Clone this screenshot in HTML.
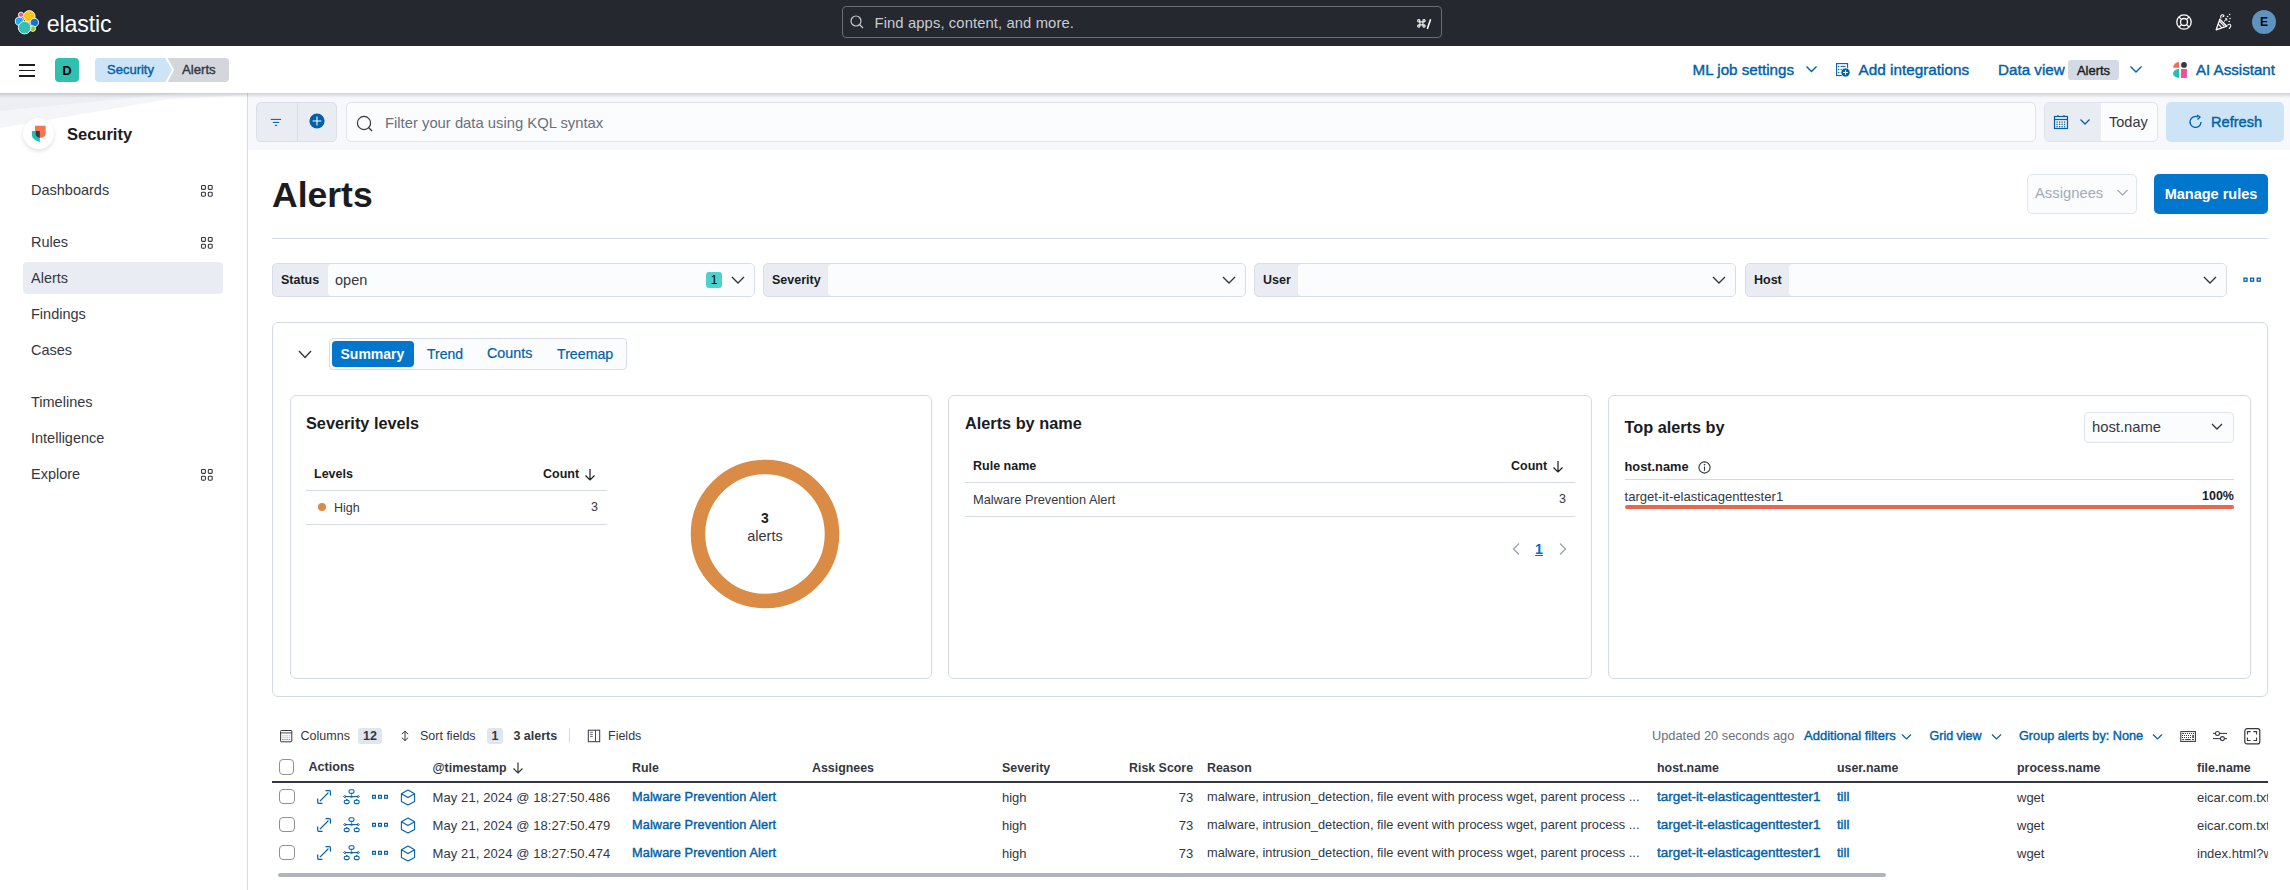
<!DOCTYPE html>
<html><head><meta charset="utf-8"><title>Alerts - Kibana</title>
<style>
html,body{margin:0;padding:0;width:2290px;height:890px;overflow:hidden;background:#fff;font-family:"Liberation Sans", sans-serif;}
.t{position:absolute;white-space:nowrap;line-height:1;}
</style></head><body>
<div style="position:absolute;left:0px;top:0px;width:2290px;height:46px;background:#25282f"></div>
<svg style="position:absolute;left:14px;top:9px;" width="28" height="28" viewBox="0 0 28 28">
<circle cx="7" cy="5.8" r="2.6" fill="#f04e98" stroke="#fff" stroke-width="0.9"/>
<circle cx="5.4" cy="12.2" r="4.1" fill="#1ba9f5" stroke="#fff" stroke-width="0.9"/>
<circle cx="15.3" cy="7.4" r="5.8" fill="#fec514" stroke="#fff" stroke-width="0.9"/>
<circle cx="20.4" cy="13.5" r="4.2" fill="#0b77d0" stroke="#fff" stroke-width="0.9"/>
<circle cx="18.8" cy="19.6" r="2.8" fill="#93c90e" stroke="#fff" stroke-width="0.9"/>
<circle cx="10.6" cy="18.6" r="6.3" fill="#34c1b2" stroke="#fff" stroke-width="0.9"/>
</svg>
<div class="t" style="left:46.8px;top:12.96px;font-size:23.2px;font-weight:400;color:#ffffff;letter-spacing:-0.15px">elastic</div>
<div style="position:absolute;left:842px;top:6.3px;width:600px;height:31.7px;border:1px solid #6a6e76;border-radius:4px;box-sizing:border-box;background:#25282f"></div>
<svg style="position:absolute;left:850px;top:15px;" width="14" height="14" viewBox="0 0 14 14"><circle cx="6" cy="6" r="5" fill="none" stroke="#c8ccd3" stroke-width="1.2"/><line x1="9.5" y1="9.5" x2="13" y2="13" stroke="#c8ccd3" stroke-width="1.2"/></svg>
<div class="t" style="left:874.5px;top:16.07px;font-size:14.8px;font-weight:400;color:#c8ccd3;letter-spacing:0.1px">Find apps, content, and more.</div>
<svg style="position:absolute;left:1417px;top:19px;" width="16" height="11" viewBox="0 0 16 11"><rect x="2.9" y="2.9" width="3" height="3" fill="none" stroke="#fff" stroke-width="1.1"/><circle cx="1.8" cy="1.8" r="1.15" fill="none" stroke="#fff" stroke-width="1.1"/><circle cx="7" cy="1.8" r="1.15" fill="none" stroke="#fff" stroke-width="1.1"/><circle cx="1.8" cy="7" r="1.15" fill="none" stroke="#fff" stroke-width="1.1"/><circle cx="7" cy="7" r="1.15" fill="none" stroke="#fff" stroke-width="1.1"/><line x1="13.6" y1="0.3" x2="10.3" y2="10" stroke="#fff" stroke-width="1.6"/></svg>
<svg style="position:absolute;left:2175px;top:13px;" width="18" height="18" viewBox="0 0 18 18"><circle cx="9" cy="9" r="7.2" fill="none" stroke="#fff" stroke-width="1.3"/><circle cx="9" cy="9" r="3.5" fill="none" stroke="#fff" stroke-width="1.3"/><line x1="4" y1="4" x2="6.5" y2="6.5" stroke="#fff" stroke-width="1.3"/><line x1="14" y1="4" x2="11.5" y2="6.5" stroke="#fff" stroke-width="1.3"/><line x1="4" y1="14" x2="6.5" y2="11.5" stroke="#fff" stroke-width="1.3"/><line x1="14" y1="14" x2="11.5" y2="11.5" stroke="#fff" stroke-width="1.3"/></svg>
<svg style="position:absolute;left:2215px;top:13px;" width="18" height="18" viewBox="0 0 18 18"><path d="M1.2 16.8 L4.8 6.2 L11.8 13.2 Z" fill="none" stroke="#fff" stroke-width="1.3" stroke-linejoin="round"/><path d="M3.2 11 L7 14.8 M4.2 8 L9.5 13.3" stroke="#fff" stroke-width="1.1"/><path d="M6 5.5 C5 3 6.5 1 8.5 2 C9.5 2.5 8.5 4 7.5 3.5" fill="none" stroke="#fff" stroke-width="1.1"/><path d="M9 8.5 L11.8 5.8 M11.8 5.8 L10 5.8 M11.8 5.8 L11.8 7.6" stroke="#fff" stroke-width="1"/><path d="M12.5 12.5 C13.5 10.5 16 11 15.8 13 C15.6 14.5 14 14.8 14.2 16" fill="none" stroke="#fff" stroke-width="1.1"/><circle cx="14.6" cy="1.6" r="0.75" fill="#fff"/><circle cx="12.5" cy="3.5" r="0.75" fill="#fff"/><circle cx="15" cy="5.5" r="0.75" fill="#fff"/><circle cx="14.2" cy="8.6" r="0.75" fill="#fff"/></svg>
<div style="position:absolute;left:2252px;top:9.8px;width:24.2px;height:24.2px;background:#6092c0;border-radius:50%"></div>
<div class="t" style="left:2264px;transform:translateX(-50%);top:15.84px;font-size:12px;font-weight:700;color:#000;">E</div>
<div style="position:absolute;left:0px;top:46px;width:2290px;height:47px;background:#fff"></div>
<div style="position:absolute;left:19px;top:64px;width:16px;height:1.6px;background:#1a1c21"></div>
<div style="position:absolute;left:19px;top:69.5px;width:16px;height:1.6px;background:#1a1c21"></div>
<div style="position:absolute;left:19px;top:75px;width:16px;height:1.6px;background:#1a1c21"></div>
<div style="position:absolute;left:55px;top:58px;width:24px;height:24px;background:#30c0b2;border-radius:4px"></div>
<div class="t" style="left:67px;transform:translateX(-50%);top:64.00px;font-size:13px;font-weight:700;color:#000;">D</div>
<svg style="position:absolute;left:95px;top:58px;" width="136" height="24" viewBox="0 0 136 24">
<path d="M4 0 H130 a4 4 0 0 1 4 4 V20 a4 4 0 0 1 -4 4 H68 L74 12 L68 0 Z" fill="#d3d6db"/>
<path d="M4 0 H72 L78 12 L72 24 H4 a4 4 0 0 1 -4 -4 V4 a4 4 0 0 1 4 -4 Z" fill="#cce4f5"/>
<path d="M71 -1 L78 12 L71 25" fill="none" stroke="#fff" stroke-width="2"/>
</svg>
<div class="t" style="left:107px;top:62.80px;font-size:13px;font-weight:400;color:#0061a6;-webkit-text-stroke:0.4px currentColor;">Security</div>
<div class="t" style="left:182px;top:62.63px;font-size:13.2px;font-weight:400;color:#343741;-webkit-text-stroke:0.4px currentColor;">Alerts</div>
<div class="t" style="left:1692.5px;top:62.33px;font-size:15.2px;font-weight:400;color:#0061a6;-webkit-text-stroke:0.4px currentColor;">ML job settings</div>
<svg style="position:absolute;left:1805px;top:64px;" width="13" height="10" viewBox="0 0 13 10"><path d="M1.5 2.5 L6.5 7.5 L11.5 2.5" fill="none" stroke="#0061a6" stroke-width="1.4"/></svg>
<svg style="position:absolute;left:1835px;top:62px;" width="16" height="16" viewBox="0 0 16 16"><rect x="1.6" y="1.6" width="11" height="12" fill="none" stroke="#0061a6" stroke-width="1.1"/><circle cx="3.7" cy="4.4" r="0.75" fill="#0061a6"/><circle cx="3.7" cy="7.4" r="0.75" fill="#0061a6"/><circle cx="3.7" cy="10.4" r="0.75" fill="#0061a6"/><line x1="5.6" y1="4.4" x2="10.6" y2="4.4" stroke="#0061a6" stroke-width="1"/><line x1="5.6" y1="7.4" x2="8" y2="7.4" stroke="#0061a6" stroke-width="1"/><line x1="5.6" y1="10.4" x2="7" y2="10.4" stroke="#0061a6" stroke-width="1"/><circle cx="10.5" cy="10.5" r="4.6" fill="#0061a6" stroke="#fff" stroke-width="0.8"/><path d="M10.5 8.2 V12.8 M8.2 10.5 H12.8" stroke="#fff" stroke-width="1.1"/></svg>
<div class="t" style="left:1858.6px;top:62.25px;font-size:15.3px;font-weight:400;color:#0061a6;-webkit-text-stroke:0.4px currentColor;">Add integrations</div>
<div class="t" style="left:1998px;top:61.63px;font-size:15.2px;font-weight:400;color:#0061a6;-webkit-text-stroke:0.4px currentColor;">Data view</div>
<div style="position:absolute;left:2068px;top:60px;width:51px;height:20px;background:#d3dae6;border-radius:3px"></div>
<div class="t" style="left:2093.5px;transform:translateX(-50%);top:63.50px;font-size:13px;font-weight:400;color:#1a1c21;-webkit-text-stroke:0.4px currentColor;">Alerts</div>
<svg style="position:absolute;left:2129px;top:64px;" width="14" height="10" viewBox="0 0 14 10"><path d="M1.5 2.5 L7 8 L12.5 2.5" fill="none" stroke="#0061a6" stroke-width="1.4"/></svg>
<svg style="position:absolute;left:2172px;top:60px;" width="16" height="20" viewBox="0 0 16 20"><path d="M7 7.8 H1.1 A5.9 5.9 0 0 1 7 1.9 Z" fill="#f86b4f"/><circle cx="12" cy="4.9" r="2.9" fill="#343741"/><path d="M7 9 V17.9 A5.9 4.45 0 0 1 7 9 Z" fill="#24bfae"/><rect x="9" y="9" width="5.9" height="8.9" fill="#f04e98"/></svg>
<div class="t" style="left:2196px;top:62.42px;font-size:15.1px;font-weight:400;color:#0061a6;-webkit-text-stroke:0.4px currentColor;">AI Assistant</div>
<div style="position:absolute;left:0px;top:93px;width:247px;height:797px;background:#fff"></div>
<div style="position:absolute;left:247px;top:93px;width:1px;height:797px;background:#d3dae6"></div>
<svg style="position:absolute;left:0;top:93px" width="247" height="40"><path d="M0 0 H247 V2 L170 6 L0 35 Z" fill="#f4f5f9"/><path d="M0 0 H180 L0 18 Z" fill="#eceef4"/></svg>
<div style="position:absolute;left:23px;top:118px;width:31px;height:31px;background:#fff;border-radius:50%;box-shadow:0 2px 4px rgba(0,0,0,0.12)"></div>
<svg style="position:absolute;left:30px;top:124px;" width="17" height="19" viewBox="0 0 17 19"><path d="M5 1.8 H15.6 V10.5 C15.6 12 13 13.5 9.8 14 V7 H5 Z" fill="#fa744e"/><path d="M1.9 7 H9.8 V18 C5 16.5 1.9 14 1.9 11 Z" fill="#24bbb1"/><path d="M5.8 7 H9.8 V14 C7.5 13.3 5.8 12 5.8 10.5 Z" fill="#343741"/></svg>
<div class="t" style="left:67px;top:125.83px;font-size:16.5px;font-weight:700;color:#1a1c21;">Security</div>
<div style="position:absolute;left:23px;top:262px;width:200px;height:32px;background:#e9edf3;border-radius:4px"></div>
<div class="t" style="left:31px;top:183.23px;font-size:14.5px;font-weight:400;color:#343741;">Dashboards</div>
<svg style="position:absolute;left:200px;top:184.0px;" width="14" height="14" viewBox="0 0 14 14"><rect x="1.5" y="1.5" width="3.9" height="3.9" rx="0.9" fill="none" stroke="#343741" stroke-width="1.1"/><rect x="1.5" y="8.3" width="3.9" height="3.9" rx="0.9" fill="none" stroke="#343741" stroke-width="1.1"/><rect x="8.3" y="1.5" width="3.9" height="3.9" rx="0.9" fill="none" stroke="#343741" stroke-width="1.1"/><rect x="8.3" y="8.3" width="3.9" height="3.9" rx="0.9" fill="none" stroke="#343741" stroke-width="1.1"/></svg>
<div class="t" style="left:31px;top:234.73px;font-size:14.5px;font-weight:400;color:#343741;">Rules</div>
<svg style="position:absolute;left:200px;top:235.5px;" width="14" height="14" viewBox="0 0 14 14"><rect x="1.5" y="1.5" width="3.9" height="3.9" rx="0.9" fill="none" stroke="#343741" stroke-width="1.1"/><rect x="1.5" y="8.3" width="3.9" height="3.9" rx="0.9" fill="none" stroke="#343741" stroke-width="1.1"/><rect x="8.3" y="1.5" width="3.9" height="3.9" rx="0.9" fill="none" stroke="#343741" stroke-width="1.1"/><rect x="8.3" y="8.3" width="3.9" height="3.9" rx="0.9" fill="none" stroke="#343741" stroke-width="1.1"/></svg>
<div class="t" style="left:31px;top:270.73px;font-size:14.5px;font-weight:400;color:#343741;">Alerts</div>
<div class="t" style="left:31px;top:306.73px;font-size:14.5px;font-weight:400;color:#343741;">Findings</div>
<div class="t" style="left:31px;top:342.73px;font-size:14.5px;font-weight:400;color:#343741;">Cases</div>
<div class="t" style="left:31px;top:394.73px;font-size:14.5px;font-weight:400;color:#343741;">Timelines</div>
<div class="t" style="left:31px;top:430.73px;font-size:14.5px;font-weight:400;color:#343741;">Intelligence</div>
<div class="t" style="left:31px;top:466.73px;font-size:14.5px;font-weight:400;color:#343741;">Explore</div>
<svg style="position:absolute;left:200px;top:467.5px;" width="14" height="14" viewBox="0 0 14 14"><rect x="1.5" y="1.5" width="3.9" height="3.9" rx="0.9" fill="none" stroke="#343741" stroke-width="1.1"/><rect x="1.5" y="8.3" width="3.9" height="3.9" rx="0.9" fill="none" stroke="#343741" stroke-width="1.1"/><rect x="8.3" y="1.5" width="3.9" height="3.9" rx="0.9" fill="none" stroke="#343741" stroke-width="1.1"/><rect x="8.3" y="8.3" width="3.9" height="3.9" rx="0.9" fill="none" stroke="#343741" stroke-width="1.1"/></svg>
<div style="position:absolute;left:248px;top:93px;width:2042px;height:57px;background:#f7f8fc"></div>
<div style="position:absolute;left:256px;top:102px;width:81px;height:40px;background:#e9edf3;border:1px solid #d9dee9;border-radius:5px;box-sizing:border-box"></div>
<div style="position:absolute;left:296.5px;top:102px;width:1px;height:40px;background:#d9dee9"></div>
<svg style="position:absolute;left:270px;top:117px;" width="13" height="12" viewBox="0 0 13 12"><line x1="0.7" y1="2.4" x2="11.1" y2="2.4" stroke="#0061a6" stroke-width="1.05"/><line x1="2.8" y1="5.4" x2="9.2" y2="5.4" stroke="#0061a6" stroke-width="1.05"/><line x1="4.8" y1="8.4" x2="7.2" y2="8.4" stroke="#0061a6" stroke-width="1.05"/></svg>
<svg style="position:absolute;left:308.5px;top:113.4px;" width="16" height="16" viewBox="0 0 16 16"><circle cx="8" cy="8" r="7.6" fill="#0061a6"/><path d="M8 3.6 V12.4 M3.6 8 H12.4" stroke="#fff" stroke-width="1.05"/></svg>
<div style="position:absolute;left:346px;top:102px;width:1690px;height:40px;background:#fbfcfd;border:1px solid #dfe3ec;border-radius:5px;box-sizing:border-box"></div>
<svg style="position:absolute;left:356px;top:115px;" width="18" height="18" viewBox="0 0 18 18"><circle cx="8" cy="8" r="6.6" fill="none" stroke="#343741" stroke-width="1.2"/><line x1="12.5" y1="12.5" x2="16" y2="16" stroke="#343741" stroke-width="1.2"/></svg>
<div class="t" style="left:385px;top:116.07px;font-size:14.8px;font-weight:400;color:#69707d;">Filter your data using KQL syntax</div>
<div style="position:absolute;left:2044px;top:102px;width:114px;height:40px;background:#fbfcfd;border:1px solid #dfe3ec;border-radius:5px;box-sizing:border-box"></div>
<div style="position:absolute;left:2045px;top:103px;width:56px;height:38px;background:#e9edf3;border-radius:4px 0 0 4px"></div>
<svg style="position:absolute;left:2053px;top:114px;" width="16" height="16" viewBox="0 0 16 16"><rect x="1.5" y="2.5" width="13" height="12" fill="none" stroke="#0061a6" stroke-width="1.2"/><line x1="1.5" y1="5.5" x2="14.5" y2="5.5" stroke="#0061a6" stroke-width="1.2"/><line x1="5" y1="1" x2="5" y2="3" stroke="#0061a6" stroke-width="1.2"/><line x1="11" y1="1" x2="11" y2="3" stroke="#0061a6" stroke-width="1.2"/><rect x="3.5" y="7.5" width="1.2" height="1.2" fill="#0061a6"/><rect x="3.5" y="9.8" width="1.2" height="1.2" fill="#0061a6"/><rect x="3.5" y="12.1" width="1.2" height="1.2" fill="#0061a6"/><rect x="6.0" y="7.5" width="1.2" height="1.2" fill="#0061a6"/><rect x="6.0" y="9.8" width="1.2" height="1.2" fill="#0061a6"/><rect x="6.0" y="12.1" width="1.2" height="1.2" fill="#0061a6"/><rect x="8.5" y="7.5" width="1.2" height="1.2" fill="#0061a6"/><rect x="8.5" y="9.8" width="1.2" height="1.2" fill="#0061a6"/><rect x="8.5" y="12.1" width="1.2" height="1.2" fill="#0061a6"/><rect x="11.0" y="7.5" width="1.2" height="1.2" fill="#0061a6"/><rect x="11.0" y="9.8" width="1.2" height="1.2" fill="#0061a6"/><rect x="11.0" y="12.1" width="1.2" height="1.2" fill="#0061a6"/></svg>
<svg style="position:absolute;left:2079px;top:118px;" width="12" height="8" viewBox="0 0 12 8"><path d="M1.5 1.5 L6 6 L10.5 1.5" fill="none" stroke="#0061a6" stroke-width="1.3"/></svg>
<div class="t" style="left:2109px;top:114.73px;font-size:14.5px;font-weight:400;color:#343741;">Today</div>
<div style="position:absolute;left:2166px;top:102px;width:118px;height:40px;background:#cce4f5;border-radius:5px"></div>
<svg style="position:absolute;left:2188px;top:114px;" width="16" height="16" viewBox="0 0 16 16"><path d="M13 8 A5.5 5.5 0 1 1 10 3" fill="none" stroke="#0061a6" stroke-width="1.3"/><path d="M9 1 L12 3 L9.5 5.5" fill="none" stroke="#0061a6" stroke-width="1.3"/></svg>
<div class="t" style="left:2211px;top:114.64px;font-size:14.6px;font-weight:400;color:#0061a6;-webkit-text-stroke:0.4px currentColor;">Refresh</div>
<div class="t" style="left:272px;top:177.75px;font-size:35.5px;font-weight:700;color:#1a1c21;">Alerts</div>
<div style="position:absolute;left:2027px;top:174px;width:110px;height:40px;background:#fbfcfd;border:1px solid #e1e5ee;border-radius:5px;box-sizing:border-box"></div>
<div class="t" style="left:2035px;top:186.47px;font-size:14.8px;font-weight:400;color:#a2abba;">Assignees</div>
<svg style="position:absolute;left:2116px;top:188px;" width="13" height="10" viewBox="0 0 13 10"><path d="M1.5 2 L6.5 7 L11.5 2" fill="none" stroke="#a2abba" stroke-width="1.3"/></svg>
<div style="position:absolute;left:2154px;top:174px;width:114px;height:40px;background:#0077cc;border-radius:5px"></div>
<div class="t" style="left:2211px;transform:translateX(-50%);top:186.73px;font-size:14.5px;font-weight:700;color:#fff;">Manage rules</div>
<div style="position:absolute;left:272px;top:238px;width:1996px;height:1px;background:#d3dae6"></div>
<div style="position:absolute;left:272px;top:263px;width:483px;height:34px;background:#e9edf3;border:1px solid #d7dce8;border-radius:5px;box-sizing:border-box"></div>
<div style="position:absolute;left:328px;top:264px;width:426px;height:32px;background:#fbfcfd;border-radius:4px"></div>
<div class="t" style="left:281px;top:274.22px;font-size:12.5px;font-weight:700;color:#1a1c21;">Status</div>
<div class="t" style="left:335px;top:273.03px;font-size:14.5px;font-weight:400;color:#343741;">open</div>
<div style="position:absolute;left:706px;top:272px;width:16px;height:16px;background:#4dd2ca;border-radius:3px"></div>
<div class="t" style="left:714px;transform:translateX(-50%);top:273.84px;font-size:12px;font-weight:400;color:#000;">1</div>
<svg style="position:absolute;left:731px;top:276px;" width="14" height="8" viewBox="0 0 14 8"><path d="M1 1 L7 7 L13 1" fill="none" stroke="#343741" stroke-width="1.4"/></svg>
<div style="position:absolute;left:763px;top:263px;width:483px;height:34px;background:#e9edf3;border:1px solid #d7dce8;border-radius:5px;box-sizing:border-box"></div>
<div style="position:absolute;left:828px;top:264px;width:417px;height:32px;background:#fbfcfd;border-radius:4px"></div>
<div class="t" style="left:772px;top:274.22px;font-size:12.5px;font-weight:700;color:#1a1c21;">Severity</div>
<svg style="position:absolute;left:1222px;top:276px;" width="14" height="8" viewBox="0 0 14 8"><path d="M1 1 L7 7 L13 1" fill="none" stroke="#343741" stroke-width="1.4"/></svg>
<div style="position:absolute;left:1254px;top:263px;width:482px;height:34px;background:#e9edf3;border:1px solid #d7dce8;border-radius:5px;box-sizing:border-box"></div>
<div style="position:absolute;left:1298px;top:264px;width:437px;height:32px;background:#fbfcfd;border-radius:4px"></div>
<div class="t" style="left:1263px;top:274.22px;font-size:12.5px;font-weight:700;color:#1a1c21;">User</div>
<svg style="position:absolute;left:1712px;top:276px;" width="14" height="8" viewBox="0 0 14 8"><path d="M1 1 L7 7 L13 1" fill="none" stroke="#343741" stroke-width="1.4"/></svg>
<div style="position:absolute;left:1745px;top:263px;width:482px;height:34px;background:#e9edf3;border:1px solid #d7dce8;border-radius:5px;box-sizing:border-box"></div>
<div style="position:absolute;left:1789px;top:264px;width:437px;height:32px;background:#fbfcfd;border-radius:4px"></div>
<div class="t" style="left:1754px;top:274.22px;font-size:12.5px;font-weight:700;color:#1a1c21;">Host</div>
<svg style="position:absolute;left:2203px;top:276px;" width="14" height="8" viewBox="0 0 14 8"><path d="M1 1 L7 7 L13 1" fill="none" stroke="#343741" stroke-width="1.4"/></svg>
<svg style="position:absolute;left:2243px;top:277px;" width="18" height="6" viewBox="0 0 18 6"><rect x="1.0" y="1.2" width="3" height="3" fill="none" stroke="#0061a6" stroke-width="1.3"/><rect x="7.6" y="1.2" width="3" height="3" fill="none" stroke="#0061a6" stroke-width="1.3"/><rect x="14.2" y="1.2" width="3" height="3" fill="none" stroke="#0061a6" stroke-width="1.3"/></svg>
<div style="position:absolute;left:272px;top:321.5px;width:1996px;height:375px;background:#fff;border:1px solid #d3dae6;border-radius:6px;box-sizing:border-box"></div>
<svg style="position:absolute;left:298px;top:350px;" width="14" height="9" viewBox="0 0 14 9"><path d="M1 1 L7 7.5 L13 1" fill="none" stroke="#343741" stroke-width="1.4"/></svg>
<div style="position:absolute;left:329px;top:338px;width:298px;height:31.5px;background:#fbfcfd;border:1px solid #d7dce8;border-radius:4px;box-sizing:border-box"></div>
<div style="position:absolute;left:332px;top:341px;width:82px;height:26px;background:#0077cc;border-radius:4px"></div>
<div class="t" style="left:340.5px;top:346.65px;font-size:14px;font-weight:700;color:#fff;">Summary</div>
<div class="t" style="left:427px;top:346.65px;font-size:14px;font-weight:400;color:#0061a6;-webkit-text-stroke:0.2px currentColor;">Trend</div>
<div class="t" style="left:487px;top:346.40px;font-size:14.3px;font-weight:400;color:#0061a6;-webkit-text-stroke:0.2px currentColor;">Counts</div>
<div class="t" style="left:557px;top:347.28px;font-size:14.2px;font-weight:400;color:#0061a6;-webkit-text-stroke:0.2px currentColor;">Treemap</div>
<div style="position:absolute;left:290px;top:394.5px;width:642px;height:284px;background:#fff;border:1px solid #d3dae6;border-radius:6px;box-sizing:border-box"></div>
<div style="position:absolute;left:948px;top:394.5px;width:644px;height:284px;background:#fff;border:1px solid #d3dae6;border-radius:6px;box-sizing:border-box"></div>
<div style="position:absolute;left:1608px;top:394.5px;width:643px;height:284px;background:#fff;border:1px solid #d3dae6;border-radius:6px;box-sizing:border-box"></div>
<div class="t" style="left:306px;top:415.20px;font-size:16.3px;font-weight:700;color:#1a1c21;">Severity levels</div>
<div class="t" style="left:314px;top:468.42px;font-size:12.5px;font-weight:700;color:#1a1c21;">Levels</div>
<div class="t" style="left:543px;top:468.42px;font-size:12.5px;font-weight:700;color:#1a1c21;">Count</div>
<svg style="position:absolute;left:584px;top:468px;" width="12" height="13" viewBox="0 0 12 13"><path d="M6 1 V12 M1.5 7.5 L6 12 L10.5 7.5" fill="none" stroke="#1a1c21" stroke-width="1.2"/></svg>
<div style="position:absolute;left:306px;top:490px;width:301px;height:1px;background:#d3dae6"></div>
<div style="position:absolute;left:318px;top:503px;width:8px;height:8px;background:#da8b45;border-radius:50%"></div>
<div class="t" style="left:334px;top:502.22px;font-size:12.5px;font-weight:400;color:#343741;">High</div>
<div class="t" style="right:1692px;top:501.22px;font-size:12.5px;font-weight:400;color:#343741;">3</div>
<div style="position:absolute;left:306px;top:524px;width:301px;height:1px;background:#d3dae6"></div>
<svg style="position:absolute;left:690px;top:459px;" width="150" height="150" viewBox="0 0 150 150"><circle cx="75" cy="75" r="67" fill="none" stroke="#da8b45" stroke-width="14.5"/></svg>
<div class="t" style="left:765px;transform:translateX(-50%);top:510.95px;font-size:14px;font-weight:700;color:#1a1c21;">3</div>
<div class="t" style="left:765px;transform:translateX(-50%);top:529.23px;font-size:14.5px;font-weight:400;color:#343741;">alerts</div>
<div class="t" style="left:965px;top:415.20px;font-size:16.3px;font-weight:700;color:#1a1c21;">Alerts by name</div>
<div class="t" style="left:973px;top:460.42px;font-size:12.5px;font-weight:700;color:#1a1c21;">Rule name</div>
<div class="t" style="left:1511px;top:460.42px;font-size:12.5px;font-weight:700;color:#1a1c21;">Count</div>
<svg style="position:absolute;left:1552px;top:460px;" width="12" height="13" viewBox="0 0 12 13"><path d="M6 1 V12 M1.5 7.5 L6 12 L10.5 7.5" fill="none" stroke="#1a1c21" stroke-width="1.2"/></svg>
<div style="position:absolute;left:965px;top:482px;width:610px;height:1px;background:#d3dae6"></div>
<div class="t" style="left:973px;top:493.96px;font-size:12.8px;font-weight:400;color:#343741;">Malware Prevention Alert</div>
<div class="t" style="right:724px;top:493.22px;font-size:12.5px;font-weight:400;color:#343741;">3</div>
<div style="position:absolute;left:965px;top:516px;width:610px;height:1px;background:#d3dae6"></div>
<svg style="position:absolute;left:1511px;top:542px;" width="10" height="14" viewBox="0 0 10 14"><path d="M8 1.5 L2.5 7 L8 12.5" fill="none" stroke="#98a2b3" stroke-width="1.3"/></svg>
<div class="t" style="left:1539px;transform:translateX(-50%);top:542.15px;font-size:14px;font-weight:700;color:#006fc4;text-decoration:underline">1</div>
<svg style="position:absolute;left:1558px;top:542px;" width="10" height="14" viewBox="0 0 10 14"><path d="M2 1.5 L7.5 7 L2 12.5" fill="none" stroke="#98a2b3" stroke-width="1.3"/></svg>
<div class="t" style="left:1624.5px;top:419.40px;font-size:16.3px;font-weight:700;color:#1a1c21;">Top alerts by</div>
<div style="position:absolute;left:2084px;top:411.5px;width:150px;height:31px;background:#fbfcfd;border:1px solid #dfe3ec;border-radius:4px;box-sizing:border-box"></div>
<div class="t" style="left:2092px;top:420.47px;font-size:14.8px;font-weight:400;color:#343741;">host.name</div>
<svg style="position:absolute;left:2211px;top:423px;" width="12" height="8" viewBox="0 0 12 8"><path d="M1 1 L6 6 L11 1" fill="none" stroke="#343741" stroke-width="1.3"/></svg>
<div class="t" style="left:1624.5px;top:461.16px;font-size:12.8px;font-weight:700;color:#1a1c21;">host.name</div>
<svg style="position:absolute;left:1697.8px;top:460.6px;" width="13" height="13" viewBox="0 0 13 13"><circle cx="6.5" cy="6.5" r="5.6" fill="none" stroke="#343741" stroke-width="1.1"/><line x1="6.5" y1="5.5" x2="6.5" y2="9.8" stroke="#343741" stroke-width="1.1"/><circle cx="6.5" cy="3.6" r="0.8" fill="#343741"/></svg>
<div style="position:absolute;left:1624.5px;top:479px;width:609px;height:1px;background:#d3dae6"></div>
<div class="t" style="left:1624.5px;top:490.11px;font-size:13.1px;font-weight:400;color:#343741;">target-it-elasticagenttester1</div>
<div class="t" style="right:56px;top:490.42px;font-size:12.5px;font-weight:700;color:#1a1c21;">100%</div>
<div style="position:absolute;left:1624.5px;top:504.5px;width:609px;height:4.2px;background:#e7664c;border-radius:2px"></div>
<svg style="position:absolute;left:279px;top:729px;" width="14" height="14" viewBox="0 0 14 14"><rect x="1.6" y="1.5" width="11.2" height="11.3" rx="0.8" fill="none" stroke="#343741" stroke-width="1"/><line x1="1.6" y1="3.9" x2="12.8" y2="3.9" stroke="#343741" stroke-width="0.9"/><path d="M3 6.8 H11.5 M3 8.4 H11.5" stroke="#b0b4bb" stroke-width="0.8" stroke-dasharray="1.6 0.6"/><path d="M3 10.4 H11.5" stroke="#69707d" stroke-width="0.8" stroke-dasharray="1.6 0.6"/></svg>
<div class="t" style="left:300.6px;top:730.22px;font-size:12.5px;font-weight:400;color:#343741;">Columns</div>
<div style="position:absolute;left:358px;top:728.3px;width:24px;height:15.5px;background:#e0e5ee;border-radius:3px"></div>
<div class="t" style="left:370px;transform:translateX(-50%);top:730.22px;font-size:12.5px;font-weight:700;color:#343741;">12</div>
<svg style="position:absolute;left:400px;top:729px;" width="11" height="13" viewBox="0 0 11 13"><path d="M5 2.2 V11.6 M1.8 5.2 L5 2.2 L8.2 5.2 M1.8 8.6 L5 11.6 L8.2 8.6" fill="none" stroke="#343741" stroke-width="1"/></svg>
<div class="t" style="left:420px;top:730.22px;font-size:12.5px;font-weight:400;color:#343741;">Sort fields</div>
<div style="position:absolute;left:487px;top:728.3px;width:16px;height:15.5px;background:#e0e5ee;border-radius:3px"></div>
<div class="t" style="left:495px;transform:translateX(-50%);top:730.22px;font-size:12.5px;font-weight:700;color:#343741;">1</div>
<div class="t" style="left:513.4px;top:730.22px;font-size:12.5px;font-weight:700;color:#343741;">3 alerts</div>
<div style="position:absolute;left:569px;top:728px;width:1px;height:15px;background:#d3dae6"></div>
<svg style="position:absolute;left:587px;top:729px;" width="14" height="14" viewBox="0 0 14 14"><rect x="1.3" y="1.2" width="11.4" height="11.5" fill="none" stroke="#343741" stroke-width="1"/><line x1="8.5" y1="1.2" x2="8.5" y2="12.7" stroke="#343741" stroke-width="0.9"/><path d="M3.2 3.3 H5.8 M3.2 5.4 H5.8 M3.2 7.4 H5.8" stroke="#343741" stroke-width="0.8"/></svg>
<div class="t" style="left:608px;top:730.22px;font-size:12.5px;font-weight:400;color:#343741;">Fields</div>
<div class="t" style="left:1652px;top:729.76px;font-size:12.8px;font-weight:400;color:#69707d;">Updated 20 seconds ago</div>
<div class="t" style="left:1804px;top:729.20px;font-size:13px;font-weight:400;color:#0061a6;-webkit-text-stroke:0.4px currentColor;">Additional filters</div>
<svg style="position:absolute;left:1901px;top:733px;" width="11" height="8" viewBox="0 0 11 8"><path d="M1 1.5 L5.5 6 L10 1.5" fill="none" stroke="#0061a6" stroke-width="1.2"/></svg>
<div class="t" style="left:1929.5px;top:730.42px;font-size:12.5px;font-weight:400;color:#0061a6;-webkit-text-stroke:0.4px currentColor;">Grid view</div>
<svg style="position:absolute;left:1991px;top:733px;" width="11" height="8" viewBox="0 0 11 8"><path d="M1 1.5 L5.5 6 L10 1.5" fill="none" stroke="#0061a6" stroke-width="1.2"/></svg>
<div class="t" style="left:2019px;top:730.25px;font-size:12.7px;font-weight:400;color:#0061a6;-webkit-text-stroke:0.4px currentColor;">Group alerts by: None</div>
<svg style="position:absolute;left:2152px;top:733px;" width="11" height="8" viewBox="0 0 11 8"><path d="M1 1.5 L5.5 6 L10 1.5" fill="none" stroke="#0061a6" stroke-width="1.2"/></svg>
<svg style="position:absolute;left:2180px;top:730px;" width="16" height="13" viewBox="0 0 16 13"><rect x="0.8" y="1.6" width="14.6" height="9.8" fill="none" stroke="#343741" stroke-width="1.05"/><rect x="5.0" y="3.0" width="1" height="1" fill="#343741"/><rect x="7.0" y="3.0" width="1" height="1" fill="#343741"/><rect x="9.0" y="3.0" width="1" height="1" fill="#343741"/><rect x="11.0" y="3.0" width="1" height="1" fill="#343741"/><rect x="13.0" y="3.0" width="1" height="1" fill="#343741"/><rect x="2.0" y="5.0" width="1" height="1" fill="#343741"/><rect x="4.0" y="5.0" width="1" height="1" fill="#343741"/><rect x="6.0" y="5.0" width="1" height="1" fill="#343741"/><rect x="8.0" y="5.0" width="1" height="1" fill="#343741"/><rect x="10.0" y="5.0" width="1" height="1" fill="#343741"/><rect x="2.0" y="7.0" width="1" height="1" fill="#343741"/><rect x="4.0" y="7.0" width="1" height="1" fill="#343741"/><rect x="6.0" y="7.0" width="1" height="1" fill="#343741"/><rect x="8.0" y="7.0" width="1" height="1" fill="#343741"/><rect x="10.0" y="7.0" width="1" height="1" fill="#343741"/><path d="M2.3 3.5 H4.1 M2.3 9.5 H4.1 M5.3 9.5 H10.8 M12 9.5 H13.8" stroke="#343741" stroke-width="1"/><rect x="12.3" y="4.9" width="1.5" height="3.2" fill="#343741"/></svg>
<svg style="position:absolute;left:2212px;top:729px;" width="16" height="13" viewBox="0 0 16 13"><line x1="1" y1="4.4" x2="15" y2="4.4" stroke="#343741" stroke-width="1.05"/><line x1="1" y1="9.6" x2="15" y2="9.6" stroke="#343741" stroke-width="1.05"/><circle cx="5.5" cy="4.4" r="2" fill="#fff" stroke="#343741" stroke-width="1.05"/><circle cx="10.4" cy="9.6" r="2" fill="#fff" stroke="#343741" stroke-width="1.05"/></svg>
<svg style="position:absolute;left:2243px;top:727px;" width="18" height="18" viewBox="0 0 18 18"><rect x="1.8" y="1.7" width="15" height="15.2" rx="2.2" fill="none" stroke="#343741" stroke-width="1.2"/><path d="M4.4 7.4 V4.6 H7.6 M10.4 4.6 H13.6 V7.4 M13.6 10.4 V13.5 H10.4 M7.6 13.5 H4.4 V10.4" fill="none" stroke="#343741" stroke-width="1.05"/></svg>
<div style="position:absolute;left:278.5px;top:759px;width:15.5px;height:15.5px;border:1.2px solid #8f9193;border-radius:4px;box-sizing:border-box;background:#fff"></div>
<div class="t" style="left:308.4px;top:761.33px;font-size:12.6px;font-weight:700;color:#343741;">Actions</div>
<div class="t" style="left:432.5px;top:761.90px;font-size:12.4px;font-weight:700;color:#343741;">@timestamp</div>
<div class="t" style="left:632px;top:761.90px;font-size:12.4px;font-weight:700;color:#343741;">Rule</div>
<div class="t" style="left:812px;top:761.90px;font-size:12.4px;font-weight:700;color:#343741;">Assignees</div>
<div class="t" style="left:1002px;top:761.90px;font-size:12.4px;font-weight:700;color:#343741;">Severity</div>
<div class="t" style="left:1129px;top:761.90px;font-size:12.4px;font-weight:700;color:#343741;">Risk Score</div>
<div class="t" style="left:1207px;top:761.90px;font-size:12.4px;font-weight:700;color:#343741;">Reason</div>
<div class="t" style="left:1657px;top:761.90px;font-size:12.4px;font-weight:700;color:#343741;">host.name</div>
<div class="t" style="left:1837px;top:761.90px;font-size:12.4px;font-weight:700;color:#343741;">user.name</div>
<div class="t" style="left:2017px;top:761.90px;font-size:12.4px;font-weight:700;color:#343741;">process.name</div>
<div class="t" style="left:2197px;top:761.90px;font-size:12.4px;font-weight:700;color:#343741;">file.name</div>
<svg style="position:absolute;left:512px;top:762px;" width="12" height="12" viewBox="0 0 12 12"><path d="M6 0.5 V11 M1.5 6.5 L6 11 L10.5 6.5" fill="none" stroke="#343741" stroke-width="1.2"/></svg>
<div style="position:absolute;left:272px;top:781px;width:1996px;height:2px;background:#343741"></div>
<div style="position:absolute;left:279.3px;top:788.5px;width:15.5px;height:15.5px;border:1.2px solid #8f9193;border-radius:4px;box-sizing:border-box;background:#fff"></div>
<svg style="position:absolute;left:316px;top:788.5px;" width="16" height="16" viewBox="0 0 16 16"><path d="M10 1.7 H13.4 a1 1 0 0 1 1 1 V6.1 M1.7 9.9 V13.3 a1 1 0 0 0 1 1 H6.1 M4.2 11.8 L12 4" fill="none" stroke="#0061a6" stroke-width="1.2" stroke-linecap="round"/></svg>
<svg style="position:absolute;left:343px;top:788.5px;" width="17" height="16" viewBox="0 0 17 16"><rect x="6" y="0.8" width="5" height="3.4" rx="1.5" fill="none" stroke="#0061a6" stroke-width="1.1"/><path d="M7.9 4.2 L8.5 5.4 L9.1 4.2" fill="#0061a6" stroke="#0061a6" stroke-width="0.8"/><path d="M1.8 7.6 H15.2" stroke="#0061a6" stroke-width="1.1"/><path d="M0.6 7.6 L1.9 6.3 L3.2 7.6 L1.9 8.9 Z M7.2 7.6 L8.5 6.3 L9.8 7.6 L8.5 8.9 Z M13.8 7.6 L15.1 6.3 L16.4 7.6 L15.1 8.9 Z" fill="none" stroke="#0061a6" stroke-width="0.9"/><rect x="1.2" y="11.2" width="5" height="3.4" rx="1.5" fill="none" stroke="#0061a6" stroke-width="1.1"/><rect x="11.2" y="11.2" width="5" height="3.4" rx="1.5" fill="none" stroke="#0061a6" stroke-width="1.1"/><path d="M3.1 11.2 L3.7 10 L4.3 11.2 M13.1 11.2 L13.7 10 L14.3 11.2" fill="#0061a6" stroke="#0061a6" stroke-width="0.8"/></svg>
<svg style="position:absolute;left:371px;top:793.5px;" width="18" height="7" viewBox="0 0 18 7"><rect x="1.6" y="1.4" width="2.8" height="2.8" fill="none" stroke="#0061a6" stroke-width="1.2"/><rect x="7.6" y="1.4" width="2.8" height="2.8" fill="none" stroke="#0061a6" stroke-width="1.2"/><rect x="13.6" y="1.4" width="2.8" height="2.8" fill="none" stroke="#0061a6" stroke-width="1.2"/></svg>
<svg style="position:absolute;left:400px;top:788.5px;" width="16" height="17" viewBox="0 0 16 17"><path d="M8 1 L14.6 4.8 V12.4 L8 16 L1.4 12.4 V4.8 Z M1.4 4.8 L8 8.6 L14.6 4.8" fill="none" stroke="#0061a6" stroke-width="1.1" stroke-linejoin="round"/></svg>
<div class="t" style="left:432.5px;top:790.50px;font-size:13px;font-weight:400;color:#343741;letter-spacing:0.1px">May 21, 2024 @ 18:27:50.486</div>
<div class="t" style="left:632px;top:790.51px;font-size:12.75px;font-weight:400;color:#0061a6;-webkit-text-stroke:0.4px currentColor;letter-spacing:0.1px">Malware Prevention Alert</div>
<div class="t" style="left:1002px;top:790.50px;font-size:13px;font-weight:400;color:#343741;">high</div>
<div class="t" style="right:1096.7px;top:790.50px;font-size:13px;font-weight:400;color:#343741;">73</div>
<div class="t" style="left:1207px;top:790.66px;font-size:12.81px;font-weight:400;color:#343741;">malware, intrusion_detection, file event with process wget, parent process ...</div>
<div class="t" style="left:1657px;top:789.87px;font-size:13.5px;font-weight:400;color:#0061a6;-webkit-text-stroke:0.4px currentColor;">target-it-elasticagenttester1</div>
<div class="t" style="left:1837px;top:789.90px;font-size:13px;font-weight:400;color:#0061a6;-webkit-text-stroke:0.4px currentColor;">till</div>
<div class="t" style="left:2017px;top:790.50px;font-size:13px;font-weight:400;color:#343741;">wget</div>
<div style="position:absolute;left:2197px;top:789.5px;width:71px;height:16px;overflow:hidden"><div class="t" style="left:0;top:1.00px;font-size:13px;color:#343741">eicar.com.txt</div></div>
<div style="position:absolute;left:279.3px;top:816.5px;width:15.5px;height:15.5px;border:1.2px solid #8f9193;border-radius:4px;box-sizing:border-box;background:#fff"></div>
<svg style="position:absolute;left:316px;top:816.5px;" width="16" height="16" viewBox="0 0 16 16"><path d="M10 1.7 H13.4 a1 1 0 0 1 1 1 V6.1 M1.7 9.9 V13.3 a1 1 0 0 0 1 1 H6.1 M4.2 11.8 L12 4" fill="none" stroke="#0061a6" stroke-width="1.2" stroke-linecap="round"/></svg>
<svg style="position:absolute;left:343px;top:816.5px;" width="17" height="16" viewBox="0 0 17 16"><rect x="6" y="0.8" width="5" height="3.4" rx="1.5" fill="none" stroke="#0061a6" stroke-width="1.1"/><path d="M7.9 4.2 L8.5 5.4 L9.1 4.2" fill="#0061a6" stroke="#0061a6" stroke-width="0.8"/><path d="M1.8 7.6 H15.2" stroke="#0061a6" stroke-width="1.1"/><path d="M0.6 7.6 L1.9 6.3 L3.2 7.6 L1.9 8.9 Z M7.2 7.6 L8.5 6.3 L9.8 7.6 L8.5 8.9 Z M13.8 7.6 L15.1 6.3 L16.4 7.6 L15.1 8.9 Z" fill="none" stroke="#0061a6" stroke-width="0.9"/><rect x="1.2" y="11.2" width="5" height="3.4" rx="1.5" fill="none" stroke="#0061a6" stroke-width="1.1"/><rect x="11.2" y="11.2" width="5" height="3.4" rx="1.5" fill="none" stroke="#0061a6" stroke-width="1.1"/><path d="M3.1 11.2 L3.7 10 L4.3 11.2 M13.1 11.2 L13.7 10 L14.3 11.2" fill="#0061a6" stroke="#0061a6" stroke-width="0.8"/></svg>
<svg style="position:absolute;left:371px;top:821.5px;" width="18" height="7" viewBox="0 0 18 7"><rect x="1.6" y="1.4" width="2.8" height="2.8" fill="none" stroke="#0061a6" stroke-width="1.2"/><rect x="7.6" y="1.4" width="2.8" height="2.8" fill="none" stroke="#0061a6" stroke-width="1.2"/><rect x="13.6" y="1.4" width="2.8" height="2.8" fill="none" stroke="#0061a6" stroke-width="1.2"/></svg>
<svg style="position:absolute;left:400px;top:816.5px;" width="16" height="17" viewBox="0 0 16 17"><path d="M8 1 L14.6 4.8 V12.4 L8 16 L1.4 12.4 V4.8 Z M1.4 4.8 L8 8.6 L14.6 4.8" fill="none" stroke="#0061a6" stroke-width="1.1" stroke-linejoin="round"/></svg>
<div class="t" style="left:432.5px;top:818.50px;font-size:13px;font-weight:400;color:#343741;letter-spacing:0.1px">May 21, 2024 @ 18:27:50.479</div>
<div class="t" style="left:632px;top:818.51px;font-size:12.75px;font-weight:400;color:#0061a6;-webkit-text-stroke:0.4px currentColor;letter-spacing:0.1px">Malware Prevention Alert</div>
<div class="t" style="left:1002px;top:818.50px;font-size:13px;font-weight:400;color:#343741;">high</div>
<div class="t" style="right:1096.7px;top:818.50px;font-size:13px;font-weight:400;color:#343741;">73</div>
<div class="t" style="left:1207px;top:818.66px;font-size:12.81px;font-weight:400;color:#343741;">malware, intrusion_detection, file event with process wget, parent process ...</div>
<div class="t" style="left:1657px;top:817.87px;font-size:13.5px;font-weight:400;color:#0061a6;-webkit-text-stroke:0.4px currentColor;">target-it-elasticagenttester1</div>
<div class="t" style="left:1837px;top:817.90px;font-size:13px;font-weight:400;color:#0061a6;-webkit-text-stroke:0.4px currentColor;">till</div>
<div class="t" style="left:2017px;top:818.50px;font-size:13px;font-weight:400;color:#343741;">wget</div>
<div style="position:absolute;left:2197px;top:817.5px;width:71px;height:16px;overflow:hidden"><div class="t" style="left:0;top:1.00px;font-size:13px;color:#343741">eicar.com.txt</div></div>
<div style="position:absolute;left:279.3px;top:844.5px;width:15.5px;height:15.5px;border:1.2px solid #8f9193;border-radius:4px;box-sizing:border-box;background:#fff"></div>
<svg style="position:absolute;left:316px;top:844.5px;" width="16" height="16" viewBox="0 0 16 16"><path d="M10 1.7 H13.4 a1 1 0 0 1 1 1 V6.1 M1.7 9.9 V13.3 a1 1 0 0 0 1 1 H6.1 M4.2 11.8 L12 4" fill="none" stroke="#0061a6" stroke-width="1.2" stroke-linecap="round"/></svg>
<svg style="position:absolute;left:343px;top:844.5px;" width="17" height="16" viewBox="0 0 17 16"><rect x="6" y="0.8" width="5" height="3.4" rx="1.5" fill="none" stroke="#0061a6" stroke-width="1.1"/><path d="M7.9 4.2 L8.5 5.4 L9.1 4.2" fill="#0061a6" stroke="#0061a6" stroke-width="0.8"/><path d="M1.8 7.6 H15.2" stroke="#0061a6" stroke-width="1.1"/><path d="M0.6 7.6 L1.9 6.3 L3.2 7.6 L1.9 8.9 Z M7.2 7.6 L8.5 6.3 L9.8 7.6 L8.5 8.9 Z M13.8 7.6 L15.1 6.3 L16.4 7.6 L15.1 8.9 Z" fill="none" stroke="#0061a6" stroke-width="0.9"/><rect x="1.2" y="11.2" width="5" height="3.4" rx="1.5" fill="none" stroke="#0061a6" stroke-width="1.1"/><rect x="11.2" y="11.2" width="5" height="3.4" rx="1.5" fill="none" stroke="#0061a6" stroke-width="1.1"/><path d="M3.1 11.2 L3.7 10 L4.3 11.2 M13.1 11.2 L13.7 10 L14.3 11.2" fill="#0061a6" stroke="#0061a6" stroke-width="0.8"/></svg>
<svg style="position:absolute;left:371px;top:849.5px;" width="18" height="7" viewBox="0 0 18 7"><rect x="1.6" y="1.4" width="2.8" height="2.8" fill="none" stroke="#0061a6" stroke-width="1.2"/><rect x="7.6" y="1.4" width="2.8" height="2.8" fill="none" stroke="#0061a6" stroke-width="1.2"/><rect x="13.6" y="1.4" width="2.8" height="2.8" fill="none" stroke="#0061a6" stroke-width="1.2"/></svg>
<svg style="position:absolute;left:400px;top:844.5px;" width="16" height="17" viewBox="0 0 16 17"><path d="M8 1 L14.6 4.8 V12.4 L8 16 L1.4 12.4 V4.8 Z M1.4 4.8 L8 8.6 L14.6 4.8" fill="none" stroke="#0061a6" stroke-width="1.1" stroke-linejoin="round"/></svg>
<div class="t" style="left:432.5px;top:846.50px;font-size:13px;font-weight:400;color:#343741;letter-spacing:0.1px">May 21, 2024 @ 18:27:50.474</div>
<div class="t" style="left:632px;top:846.51px;font-size:12.75px;font-weight:400;color:#0061a6;-webkit-text-stroke:0.4px currentColor;letter-spacing:0.1px">Malware Prevention Alert</div>
<div class="t" style="left:1002px;top:846.50px;font-size:13px;font-weight:400;color:#343741;">high</div>
<div class="t" style="right:1096.7px;top:846.50px;font-size:13px;font-weight:400;color:#343741;">73</div>
<div class="t" style="left:1207px;top:846.66px;font-size:12.81px;font-weight:400;color:#343741;">malware, intrusion_detection, file event with process wget, parent process ...</div>
<div class="t" style="left:1657px;top:845.87px;font-size:13.5px;font-weight:400;color:#0061a6;-webkit-text-stroke:0.4px currentColor;">target-it-elasticagenttester1</div>
<div class="t" style="left:1837px;top:845.90px;font-size:13px;font-weight:400;color:#0061a6;-webkit-text-stroke:0.4px currentColor;">till</div>
<div class="t" style="left:2017px;top:846.50px;font-size:13px;font-weight:400;color:#343741;">wget</div>
<div style="position:absolute;left:2197px;top:845.5px;width:71px;height:16px;overflow:hidden"><div class="t" style="left:0;top:1.00px;font-size:13px;color:#343741">index.html?wget</div></div>
<div style="position:absolute;left:278px;top:872.8px;width:1608px;height:4px;background:#b0b5bd;border-radius:3px"></div>
<div style="position:absolute;left:0;top:93px;width:2290px;height:5px;background:linear-gradient(rgba(52,55,65,0.2),rgba(52,55,65,0))"></div>
</body></html>
